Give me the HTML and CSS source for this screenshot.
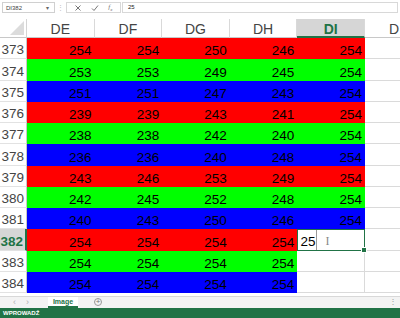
FILE: index.html
```html
<!DOCTYPE html>
<html lang="pl">
<head>
  <meta charset="UTF-8">
  <title>Image</title>
  <link rel="stylesheet" href="styles.css">
</head>
<body>
  <div id="app">
    <div class="fbar">
      <div class="namebox"><span>DI382</span><span class="caret">&#9662;</span></div>
      <div class="fdots">&#8942;</div>
      <div class="fbtns">
        <svg width="8" height="8" viewBox="0 0 8 8"><path d="M1.5 1.5 L6.5 6.5 M6.5 1.5 L1.5 6.5" stroke="#777" stroke-width="1" fill="none"/></svg>
        <svg width="8" height="8" viewBox="0 0 8 8"><path d="M1 4.5 L3 6.5 L7 1.5" stroke="#777" stroke-width="1" fill="none"/></svg>
        <span class="fx">f<sub>x</sub></span>
      </div>
      <div class="finput">25</div>
    </div>

    <div class="row head">
      <div class="corner"><span class="tri"></span></div>
      <div class="col">DE</div>
      <div class="col">DF</div>
      <div class="col">DG</div>
      <div class="col">DH</div>
      <div class="col active">DI</div>
      <div class="col last">D</div>
    </div>

    <div class="row">
      <div class="num">373</div>
      <div class="c red">254</div><div class="c red">254</div><div class="c red">250</div><div class="c red">246</div><div class="c red">254</div><div class="c e"></div>
    </div>
    <div class="row">
      <div class="num">374</div>
      <div class="c green">253</div><div class="c green">253</div><div class="c green">249</div><div class="c green">245</div><div class="c green">254</div><div class="c e"></div>
    </div>
    <div class="row">
      <div class="num">375</div>
      <div class="c blue">251</div><div class="c blue">251</div><div class="c blue">247</div><div class="c blue">243</div><div class="c blue">254</div><div class="c e"></div>
    </div>
    <div class="row">
      <div class="num">376</div>
      <div class="c red">239</div><div class="c red">239</div><div class="c red">243</div><div class="c red">241</div><div class="c red">254</div><div class="c e"></div>
    </div>
    <div class="row">
      <div class="num">377</div>
      <div class="c green">238</div><div class="c green">238</div><div class="c green">242</div><div class="c green">240</div><div class="c green">254</div><div class="c e"></div>
    </div>
    <div class="row">
      <div class="num">378</div>
      <div class="c blue">236</div><div class="c blue">236</div><div class="c blue">240</div><div class="c blue">248</div><div class="c blue">254</div><div class="c e"></div>
    </div>
    <div class="row">
      <div class="num">379</div>
      <div class="c red">243</div><div class="c red">246</div><div class="c red">253</div><div class="c red">249</div><div class="c red">254</div><div class="c e"></div>
    </div>
    <div class="row">
      <div class="num">380</div>
      <div class="c green">242</div><div class="c green">245</div><div class="c green">252</div><div class="c green">248</div><div class="c green">254</div><div class="c e"></div>
    </div>
    <div class="row">
      <div class="num">381</div>
      <div class="c blue">240</div><div class="c blue">243</div><div class="c blue">250</div><div class="c blue">246</div><div class="c blue">254</div><div class="c e"></div>
    </div>
    <div class="row">
      <div class="num active">382</div>
      <div class="c red">254</div><div class="c red">254</div><div class="c red">254</div><div class="c red">254</div>
      <div class="c edit"><span class="typed">25</span><span class="ibeam">I</span><span class="handle"></span></div>
      <div class="c e"></div>
    </div>
    <div class="row">
      <div class="num">383</div>
      <div class="c green">254</div><div class="c green">254</div><div class="c green">254</div><div class="c green">254</div><div class="c e"></div><div class="c e"></div>
    </div>
    <div class="row">
      <div class="num">384</div>
      <div class="c blue">254</div><div class="c blue">254</div><div class="c blue">254</div><div class="c blue">254</div><div class="c e"></div><div class="c e"></div>
    </div>

    <div class="tabs">
      <div class="nav">&#8249;</div>
      <div class="nav">&#8250;</div>
      <div class="tab">Image</div>
      <div class="add">+</div>
      <div class="grip">&#8942;</div>
    </div>

    <div class="status">WPROWADŹ</div>
  </div>
</body>
</html>
```
FILE: styles.css
```css
html, body {
  margin: 0;
  padding: 0;
  background: #ffffff;
}

#app {
  width: 400px;
  height: 318px;
  overflow: hidden;
  font-family: "Liberation Sans", Arial, sans-serif;
  color: #000;
}

/* formula bar */
.fbar {
  height: 19px;
  display: flex;
  align-items: flex-start;
  padding-top: 2px;
  box-sizing: border-box;
}

.namebox {
  width: 53px;
  height: 11px;
  margin-left: 2px;
  border: 1px solid #d0d0d0;
  box-sizing: border-box;
  display: flex;
  align-items: center;
  justify-content: space-between;
  padding: 0 5px 0 3px;
  font-size: 6px;
  color: #444;
}

.caret {
  font-size: 6px;
  color: #666;
}

.fdots {
  width: 11px;
  text-align: center;
  font-size: 7px;
  line-height: 11px;
  color: #bbb;
}

.fbtns {
  width: 55px;
  height: 11px;
  border: 1px solid #d8d8d8;
  box-sizing: border-box;
  display: flex;
  align-items: center;
  justify-content: space-around;
  padding: 0 3px;
}

.fx {
  font-family: "Liberation Serif", serif;
  font-style: italic;
  font-size: 7px;
  color: #777;
}

.fx sub {
  font-size: 5px;
}

.finput {
  flex: 1;
  height: 11px;
  margin-left: 1px;
  margin-right: 2px;
  border: 1px solid #d8d8d8;
  box-sizing: border-box;
  font-size: 6px;
  line-height: 9px;
  padding-left: 5px;
  color: #222;
}

/* grid */
.row {
  display: grid;
  grid-template-columns: 27px repeat(5, 67.6px) 1fr;
  height: 21.25px;
}

.row.head {
  height: 19px;
}

.corner {
  position: relative;
  border-right: 1px solid #d4d4d4;
  border-bottom: 1px solid #c8c8c8;
}

.tri {
  position: absolute;
  right: 2px;
  bottom: 2px;
  width: 0;
  height: 0;
  border-left: 14px solid transparent;
  border-bottom: 14px solid #dcdcdc;
}

.col {
  display: flex;
  align-items: center;
  justify-content: center;
  padding-top: 2px;
  font-size: 14px;
  color: #444;
  border-right: 1px solid #d9d9d9;
  border-bottom: 1px solid #c8c8c8;
  box-sizing: border-box;
  overflow: hidden;
}

.col.active {
  background: #d6d6d6;
  color: #217346;
  font-weight: bold;
  border-bottom: 2px solid #217346;
}

.col.last {
  justify-content: flex-end;
  padding-right: 1px;
  border-right: none;
}

.num {
  display: flex;
  align-items: flex-end;
  justify-content: flex-end;
  padding-right: 2px;
  font-size: 13.5px;
  line-height: 16px;
  color: #444;
  border-right: 1px solid #c8c8c8;
  border-bottom: 1px solid #e2e2e2;
  box-sizing: border-box;
}

.num.active {
  background: #d6d6d6;
  color: #217346;
  font-weight: bold;
  border-right: 2px solid #217346;
}

.c {
  display: flex;
  align-items: flex-end;
  justify-content: flex-end;
  padding-right: 3px;
  font-size: 13.5px;
  line-height: 16px;
  box-sizing: border-box;
}

.red { background: #ff0000; }
.green { background: #00ff00; }
.blue { background: #0000ff; }

.e {
  border-right: 1px solid #dadada;
  border-bottom: 1px solid #dadada;
}

.row > .e:last-child {
  border-right: none;
}

/* cell being edited */
.edit {
  position: relative;
  justify-content: flex-start;
  padding: 0;
  border: 1.5px solid #217346;
}

.typed {
  padding: 0 1px 0 2px;
  border-right: 1px solid #9a9a9a;
  height: 100%;
  display: flex;
  align-items: flex-end;
  font-size: 13.5px;
}

.ibeam {
  position: absolute;
  left: 27px;
  top: 3px;
  font-family: "Liberation Serif", serif;
  font-size: 12px;
  color: #888;
}

.handle {
  position: absolute;
  right: -3px;
  bottom: -3px;
  width: 4px;
  height: 4px;
  background: #217346;
  border: 1px solid #fff;
}

/* sheet tabs */
.tabs {
  height: 12px;
  margin-top: 3px;
  background: #f3f3f3;
  border-top: 1px solid #d8d8d8;
  box-sizing: border-box;
  display: flex;
  align-items: stretch;
}

.nav {
  width: 13px;
  text-align: center;
  font-size: 9px;
  line-height: 10px;
  color: #b0b0b0;
}

.nav:first-child {
  margin-left: 8px;
}

.tab {
  margin-left: 14px;
  width: 30px;
  background: #ffffff;
  color: #217346;
  font-weight: bold;
  font-size: 7px;
  text-align: center;
  line-height: 9px;
  border-bottom: 2px solid #217346;
  box-sizing: border-box;
}

.add {
  margin-left: 16px;
  margin-top: 1px;
  width: 8px;
  height: 8px;
  border: 1px solid #999;
  border-radius: 50%;
  box-sizing: border-box;
  font-size: 8px;
  line-height: 6px;
  text-align: center;
  color: #777;
}

.grip {
  margin-left: auto;
  margin-right: 3px;
  font-size: 8px;
  line-height: 10px;
  color: #999;
}

.status {
  height: 10px;
  background: #217346;
  color: #ffffff;
  font-size: 6px;
  font-weight: bold;
  line-height: 10px;
  padding-left: 3px;
}
```
